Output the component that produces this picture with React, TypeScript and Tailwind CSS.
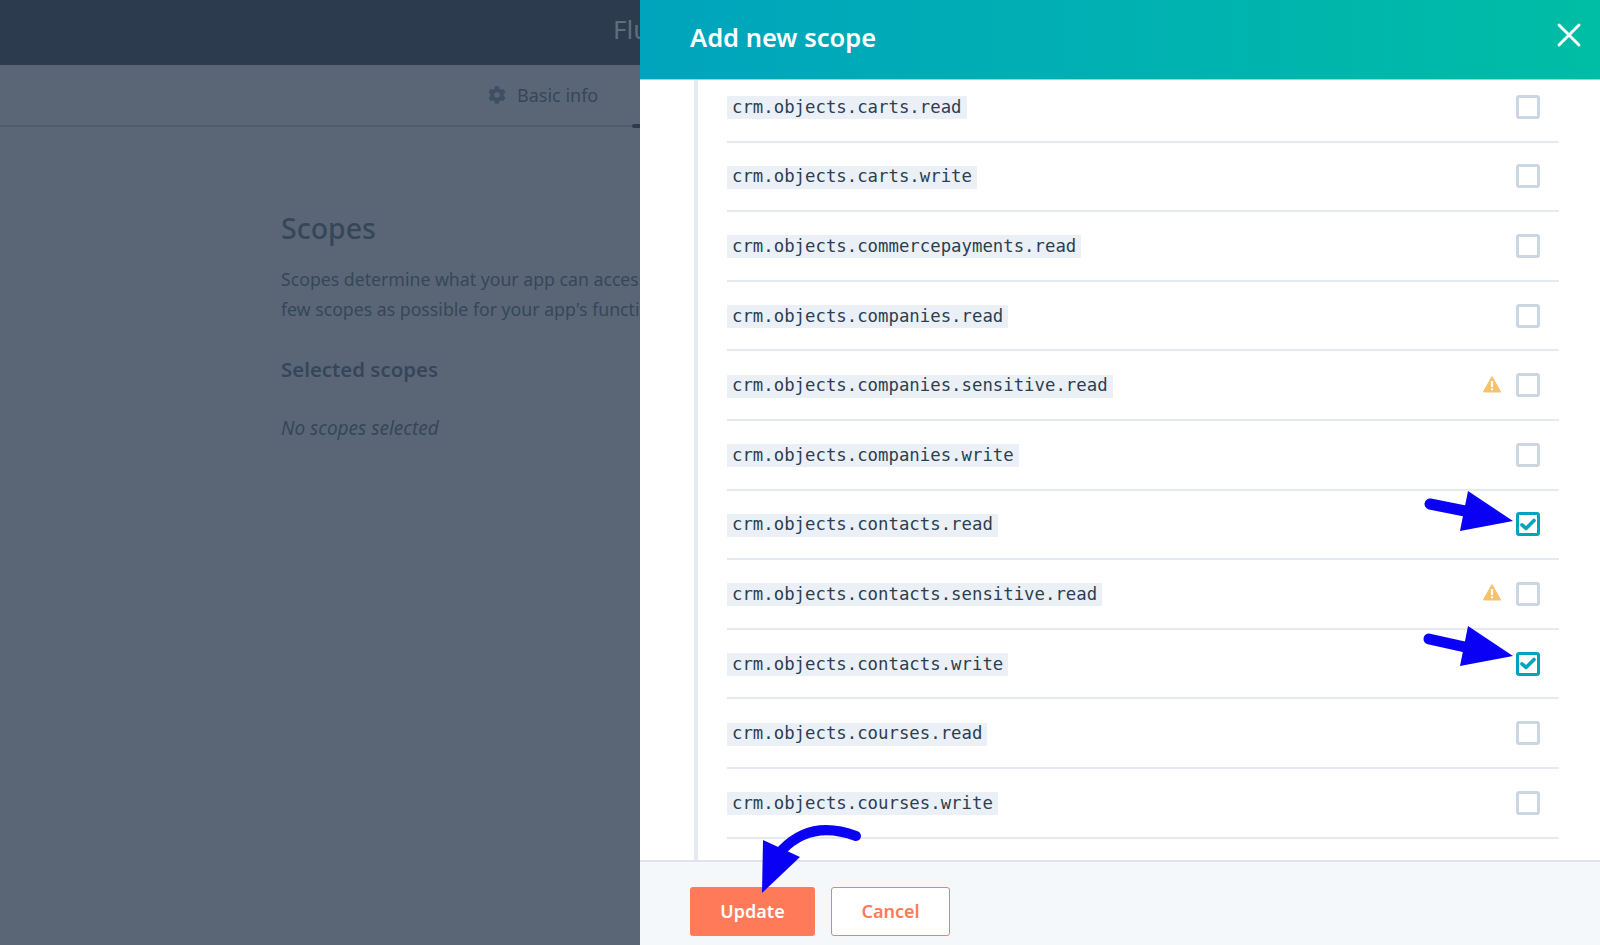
import React from "react";
import { X } from "lucide-react";
import { FaCog } from "react-icons/fa";

const scopes: { name: string; warn?: boolean; checked?: boolean }[] = [
  { name: "crm.objects.carts.read" },
  { name: "crm.objects.carts.write" },
  { name: "crm.objects.commercepayments.read" },
  { name: "crm.objects.companies.read" },
  { name: "crm.objects.companies.sensitive.read", warn: true },
  { name: "crm.objects.companies.write" },
  { name: "crm.objects.contacts.read", checked: true },
  { name: "crm.objects.contacts.sensitive.read", warn: true },
  { name: "crm.objects.contacts.write", checked: true },
  { name: "crm.objects.courses.read" },
  { name: "crm.objects.courses.write" },
  { name: "crm.objects.custom.read" },
];

function Warning() {
  return (
    <svg width="18" height="17" viewBox="0 0 18 17" className="mr-[15px] -translate-y-[1px]">
      <path d="M9 1.4 L17 15.6 H1 Z" fill="#f5c26b" stroke="#f5c26b" strokeWidth="1.8" strokeLinejoin="round" />
      <rect x="7.9" y="5" width="2.2" height="6" rx="0.6" fill="#fff" />
      <rect x="7.9" y="12.2" width="2.2" height="2.2" rx="0.6" fill="#fff" />
    </svg>
  );
}

function Checkbox({ checked }: { checked?: boolean }) {
  return checked ? (
    <div className="w-6 h-6 rounded-[3px] border-[3px] border-[#00a4bd] bg-white flex items-center justify-center">
      <svg width="16" height="13" viewBox="0 0 16 13">
        <path d="M2 6.8 L6 10.4 L14 2.4" fill="none" stroke="#00a4bd" strokeWidth="3.6" strokeLinecap="round" strokeLinejoin="round" />
      </svg>
    </div>
  ) : (
    <div className="w-6 h-6 rounded-[3px] border-[3px] border-[#cbd6e2] bg-white" />
  );
}

function Row({ name, warn, checked }: { name: string; warn?: boolean; checked?: boolean }) {
  return (
    <div className="h-[69.6px] shrink-0 flex items-center border-b-2 border-[#e5eaf2] pr-[19px]">
      <code className="h-[23px] flex items-center px-[5px] translate-y-[1px] bg-[#eaf0f6] text-[#2d3e50] text-[17.33px] font-['DejaVu_Sans_Mono',monospace] tracking-normal">
        {name}
      </code>
      <div className="ml-auto flex items-center">
        {warn && <Warning />}
        <Checkbox checked={checked} />
      </div>
    </div>
  );
}

export default function App() {
  return (
    <div className="relative w-full h-screen overflow-hidden flex font-['Noto_Sans',sans-serif] bg-[#5a6675]">
      <div className="w-[640px] shrink-0 flex flex-col overflow-hidden">
        <div className="h-[65px] shrink-0 bg-[#2d3b4e] flex items-center justify-end overflow-hidden">
          <span className="-mr-[20px] w-[47px] text-[26px] text-[#5f6d7d] whitespace-nowrap -translate-y-[3px]">Flux</span>
        </div>
        <div className="h-[62px] shrink-0 border-b-2 border-[#505c6b] flex items-center relative">
          <div className="flex items-center gap-[11px] ml-[488px] text-[#36465a]">
            <FaCog size={18} className="text-[#3f4f63]" />
            <span className="text-[18px] whitespace-nowrap">Basic info</span>
          </div>
          <div className="absolute right-0 -bottom-[3px] w-[8px] h-[4px] rounded-l bg-[#2d3b4e]" />
        </div>
        <div className="pl-[281px] pt-[83px] text-[#36465a] whitespace-nowrap">
          <h2 className="text-[28.5px] font-medium leading-[36px]">Scopes</h2>
          <p className="mt-[18px] text-[17.7px] leading-[30px]">
            Scopes determine what your app can access. Select as
            <br />
            few scopes as possible for your app's functionality.
          </p>
          <h3 className="mt-[31px] text-[20.4px] font-semibold leading-[28px]">Selected scopes</h3>
          <p className="mt-[32px] text-[19px] italic leading-[26px]">No scopes selected</p>
        </div>
      </div>

      <div className="w-[960px] shrink-0 flex flex-col bg-white">
        <div className="h-[80px] shrink-0 bg-gradient-to-r from-[#00a4bd] to-[#00bda5] flex items-center pl-[50px] pr-[11px] justify-between border-b border-[#8fdbd8]">
          <h1 className="text-[25.5px] font-semibold text-white -translate-y-[2px]">Add new scope</h1>
          <X size={40} strokeWidth={1.7} className="text-white -translate-y-[5px]" />
        </div>
        <div className="flex-1 min-h-0 overflow-hidden pl-[54px] pr-[41px]">
          <div className="h-full overflow-hidden border-l-4 border-[#e5eaf2] pl-[29px]">
            <div className="-mt-[7px] flex flex-col">
              {scopes.map((s) => (
                <Row key={s.name} {...s} />
              ))}
            </div>
          </div>
        </div>
        <div className="h-[85px] shrink-0 bg-[#f5f8fa] border-t-2 border-[#dfe3eb] pt-[25px] pl-[50px] flex gap-[16px] items-start">
          <button className="w-[125px] h-[49px] rounded-[3px] bg-[#ff7a59] text-white text-[18px] font-semibold">Update</button>
          <button className="w-[119px] h-[49px] rounded-[3px] bg-white border border-[#ff7a59] text-[#ff7a59] text-[18px] font-semibold">Cancel</button>
        </div>
      </div>

      <svg className="absolute inset-0 pointer-events-none" width="1600" height="945" viewBox="0 0 1600 945">
        <g fill="#0a00f5" stroke="none">
          <path d="M1430 504 L1465 511" stroke="#0a00f5" strokeWidth="11" strokeLinecap="round" />
          <path d="M1468 491 L1513 521 L1460 531 Z" />
          <path d="M1429 639 L1465 647" stroke="#0a00f5" strokeWidth="11" strokeLinecap="round" />
          <path d="M1468 626 L1513 656 L1460 666 Z" />
          <path d="M856 836 C 832 827 805 826 782 850" fill="none" stroke="#0a00f5" strokeWidth="10" strokeLinecap="round" />
          <path d="M763 840 L800 857 L762 893 Z" />
        </g>
      </svg>
    </div>
  );
}
